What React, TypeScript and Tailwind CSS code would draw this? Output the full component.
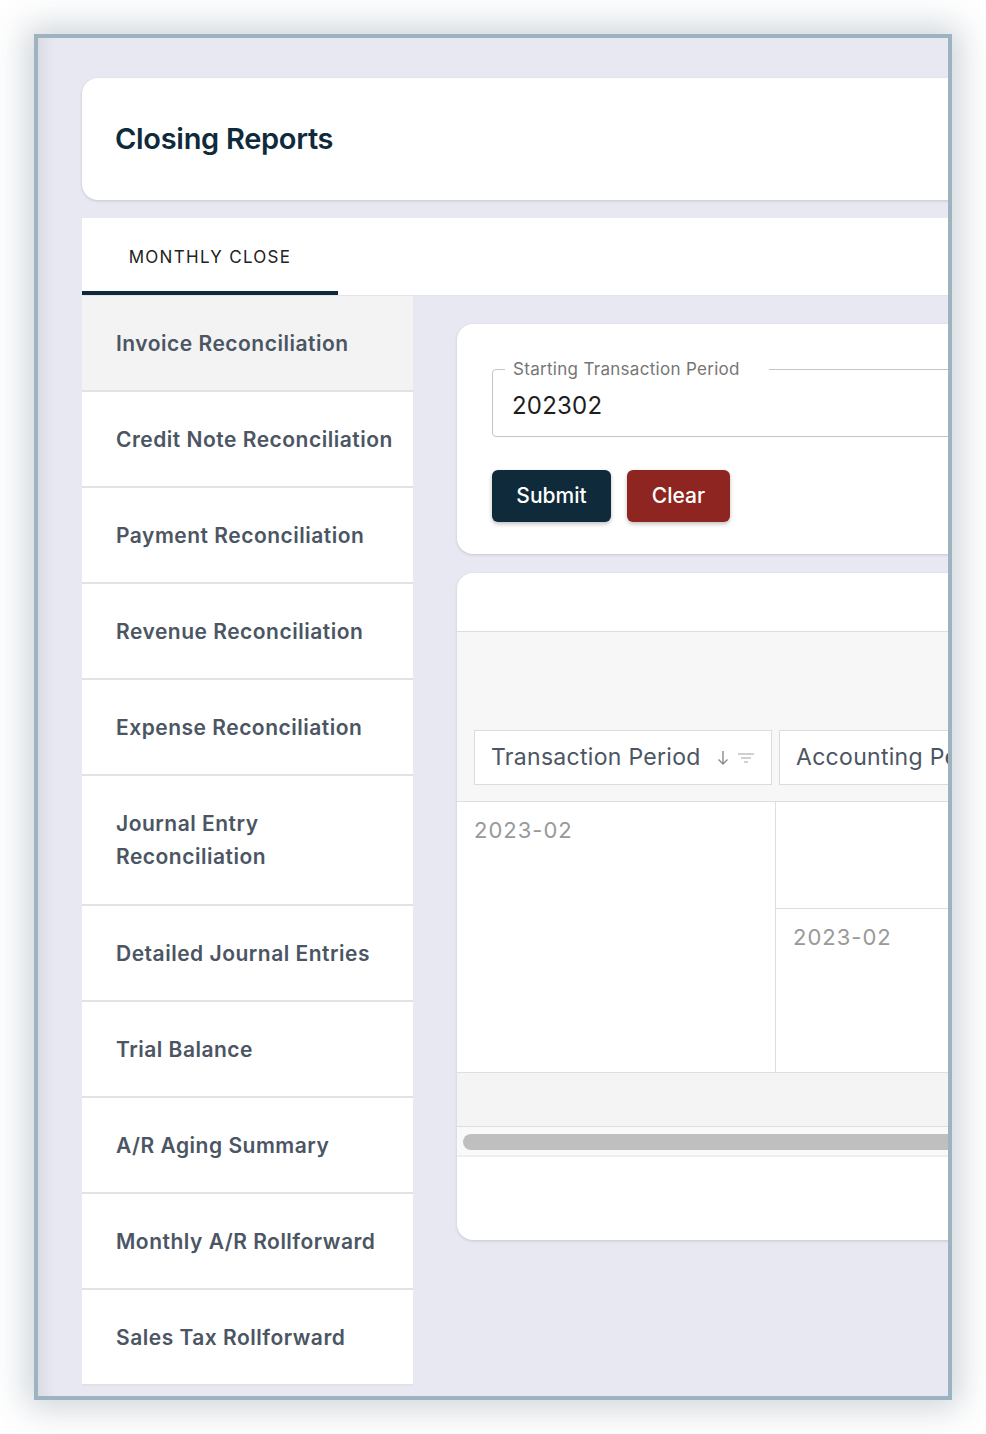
import React from "react";

const reports = [
  "Invoice Reconciliation",
  "Credit Note Reconciliation",
  "Payment Reconciliation",
  "Revenue Reconciliation",
  "Expense Reconciliation",
  "Journal Entry Reconciliation",
  "Detailed Journal Entries",
  "Trial Balance",
  "A/R Aging Summary",
  "Monthly A/R Rollforward",
  "Sales Tax Rollforward",
];

function SortIcons() {
  return (
    <div className="flex items-center gap-[8px] ml-[16px]">
      <svg width="12" height="18" viewBox="0 0 12 18" fill="none">
        <path d="M6 2v13M1.5 10.5 6 15l4.5-4.5" stroke="#8a8a8a" strokeWidth="1.4" />
      </svg>
      <svg width="18" height="14" viewBox="0 0 18 14" fill="none">
        <path d="M1 3h16M4 7h10M7 11h4" stroke="#c2c2c2" strokeWidth="1.6" />
      </svg>
    </div>
  );
}

export default function App() {
  return (
    <div className="w-[986px] h-[1434px] bg-white p-[34px] font-['Inter',sans-serif]">
      <div className="w-[918px] h-[1366px] border-4 border-[#9db3c0] bg-[#e8e8f2] overflow-hidden shadow-[0_0_32px_8px_rgba(60,90,110,0.26),inset_16px_0_14px_-10px_rgba(0,0,0,0.07)]">
        <div className="w-[1300px] pl-[44px] pt-[40px]">
          {/* Page title */}
          <div className="h-[122px] bg-white rounded-2xl shadow-[0_1px_3px_rgba(0,0,0,0.15)] flex items-center pl-[33px]">
            <h1 className="text-[29px] font-semibold text-[#0f2a3a] tracking-[-0.3px]">Closing Reports</h1>
          </div>

          {/* Tabs */}
          <div className="mt-[18px] h-[78px] bg-white flex border-b border-[#e4e4ea]">
            <div className="w-[256px] h-full border-b-4 border-[#10293a] flex items-center justify-center pt-[6px]">
              <span className="text-[17px] tracking-[1.3px] text-[#222]">MONTHLY CLOSE</span>
            </div>
          </div>

          <div className="flex">
            {/* Report list */}
            <div className="w-[331px] shrink-0">
              {reports.map((name, i) => (
                <div
                  key={name}
                  className={
                    (i === 0 ? "bg-[#f3f3f3] " : "bg-white ") +
                    (name === "Journal Entry Reconciliation" ? "h-[130px] " : "h-[96px] ") +
                    "border-b-2 border-[#e2e2e4] flex items-center pl-[34px] pr-[6px]"
                  }
                >
                  <span className="text-[21px] leading-[33px] font-semibold tracking-[0.5px] text-[#4b5563]">{name}</span>
                </div>
              ))}
            </div>

            <div className="flex-1 pl-[44px] pt-[28px]">
              {/* Filter form */}
              <div className="bg-white rounded-2xl shadow-[0_1px_3px_rgba(0,0,0,0.15)] pl-[35px] pt-[33px] pb-[32px]">
                <fieldset className="w-[700px] border border-[#c4c4c4] rounded-[4px] px-0">
                  <legend className="ml-[12px] pl-[8px] pr-[29px] text-[17px] leading-[24px] tracking-[0.3px] text-[#767676]">
                    Starting Transaction Period
                  </legend>
                  <div className="h-[55px] pl-[19px] pt-[9px] text-[24px] leading-[32px] tracking-[0.2px] text-[#1d1d1d]">202302</div>
                </fieldset>
                <div className="flex gap-[16px] mt-[33px]">
                  <button className="w-[119px] h-[52px] rounded-[6px] bg-[#0f2a3a] text-white text-[21px] font-medium shadow-[0_2px_4px_rgba(0,0,0,0.25)]">
                    Submit
                  </button>
                  <button className="w-[103px] h-[52px] rounded-[6px] bg-[#8e2520] text-white text-[21px] font-medium shadow-[0_2px_4px_rgba(0,0,0,0.25)]">
                    Clear
                  </button>
                </div>
              </div>

              {/* Results grid */}
              <div className="mt-[19px] bg-white rounded-2xl shadow-[0_1px_3px_rgba(0,0,0,0.15)] overflow-hidden">
                <div className="h-[59px] border-b border-[#dedede]" />
                <div className="h-[170px] bg-[#f7f7f7] border-b border-[#dedede] flex items-end pl-[17px] pb-[16px] gap-[7px]">
                  <div className="w-[298px] h-[55px] bg-white border border-[#dcdcdc] flex items-center pl-[16px]">
                    <span className="text-[23px] tracking-[0.3px] text-[#4b5563]">Transaction Period</span>
                    <SortIcons />
                  </div>
                  <div className="w-[298px] h-[55px] bg-white border border-[#dcdcdc] flex items-center pl-[16px]">
                    <span className="text-[23px] tracking-[0.3px] text-[#4b5563]">Accounting Period</span>
                  </div>
                </div>
                <div className="flex h-[270px]">
                  <div className="w-[319px] border-r border-[#dedede] pl-[17px] pt-[12px]">
                    <span className="text-[22px] tracking-[1px] text-[#999]">2023-02</span>
                  </div>
                  <div className="flex-1 flex flex-col">
                    <div className="h-[107px] border-b border-[#dedede]" />
                    <div className="flex-1 pl-[17px] pt-[12px]">
                      <span className="text-[22px] tracking-[1px] text-[#999]">2023-02</span>
                    </div>
                  </div>
                </div>
                <div className="h-[55px] bg-[#f4f4f4] border-t border-b border-[#dedede]" />
                <div className="h-[30px] bg-[#f9f9f9] border-b-2 border-[#eeeeee] pl-[6px] pt-[7px]">
                  <div className="w-[700px] h-[16px] rounded-full bg-[#bfbfbf]" />
                </div>
                <div className="h-[83px]" />
              </div>
            </div>
          </div>
        </div>
      </div>
    </div>
  );
}
